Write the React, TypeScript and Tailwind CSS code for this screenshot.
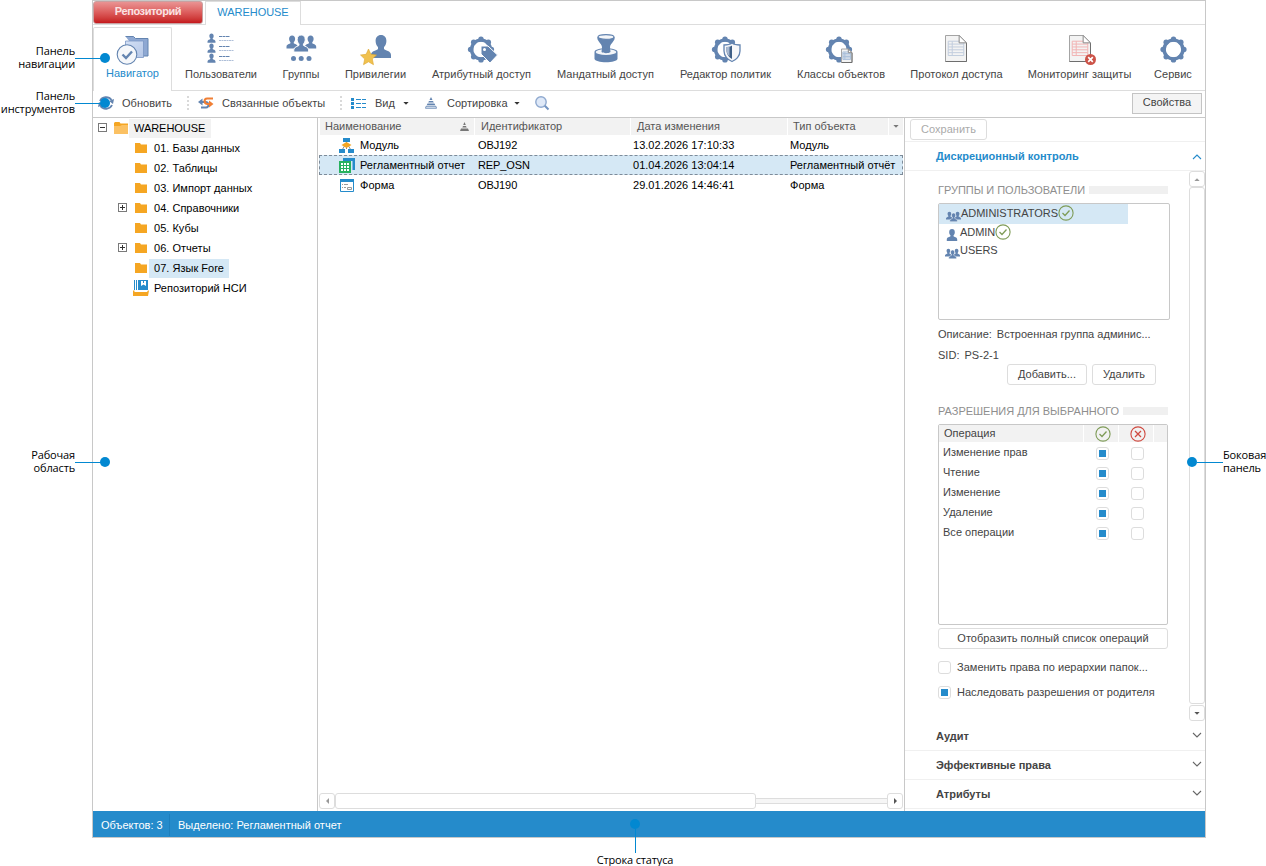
import React from "react";

const BLUE = "#6384b0";

function Gear({ cx = 14, cy = 16.5 }: { cx?: number; cy?: number }) {
  const bumps = [0, 45, 90, 135, 180, 225, 270, 315];
  return (
    <g fill={BLUE}>
      <circle cx={cx} cy={cy} r="9.4" fill="none" stroke={BLUE} strokeWidth="3.4" />
      {bumps.map((a) => (
        <circle
          key={a}
          cx={cx + 10.4 * Math.cos((a * Math.PI) / 180)}
          cy={cy + 10.4 * Math.sin((a * Math.PI) / 180)}
          r="2.7"
        />
      ))}
    </g>
  );
}

function Person({ x = 0, y = 0, s = 1 }: { x?: number; y?: number; s?: number }) {
  return (
    <g transform={`translate(${x} ${y}) scale(${s})`}>
      <path
        fill={BLUE}
        d="M10 0c3.4 0 5.4 2.4 5.4 6 0 2.6-1 4.8-2.4 6v2c1 1.5 7 1.700 7 6v3H0v-3c0-4.300 6-4.500 7-6v-2C5.600 10.800 4.600 8.600 4.600 6c0-3.600 2-6 5.400-6z"
      />
    </g>
  );
}

function GroupIcon() {
  return (
    <svg width="15" height="11" viewBox="0 0 15 11" className="shrink-0">
      <Person x={0} y={0.8} s={0.34} />
      <Person x={8.2} y={0.8} s={0.34} />
      <g stroke="#fff" strokeWidth="1.200">
        <Person x={3.800} y={2} s={0.38} />
      </g>
    </svg>
  );
}

function Sheet({ x, y, w, h, line }: { x: number; y: number; w: number; h: number; line: string }) {
  const f = w * 0.35;
  const rows = [0, 1, 2, 3, 4, 5];
  const top = y + h * 0.22;
  const gh = (h * 0.55) / 5;
  return (
    <g>
      <path
        d={`M${x} ${y}h${w - f}l${f} ${f}v${h - f}h${-w}z`}
        fill="#f3f3f3"
        stroke="#a4a4a4"
      />
      <path d={`M${x + w} ${y + f}v${h - f}h${-w}`} fill="none" stroke="#6e6e6e" />
      <g stroke={line} strokeWidth="1" fill="none">
        {rows.map((r) => (
          <path key={r} d={`M${x + w * 0.13} ${top + r * gh}h${w * 0.74}`} />
        ))}
        <path
          d={`M${x + w * 0.13} ${top}v${gh * 5}M${x + w * 0.32} ${top}v${gh * 5}M${x + w * 0.87} ${top}v${gh * 5}`}
        />
      </g>
      <path d={`M${x + w - f} ${y}v${f}h${f}z`} fill="#fff" stroke="#8a8a8a" />
    </g>
  );
}

const navIcons: Record<string, React.ReactNode> = {
  nav: (
    <g>
      <defs>
        <linearGradient id="fold" x1="0" y1="0" x2="1" y2="1">
          <stop offset="0" stopColor="#d3e0f5" />
          <stop offset="1" stopColor="#b4c6e6" />
        </linearGradient>
      </defs>
      <path d="M8.500 3.500h8l2 2h12.500V23H24" fill="#8ea8d2" stroke={BLUE} />
      <path d="M8.500 8h18v16.500h-18z" fill="url(#fold)" stroke="#7b97c4" strokeWidth=".8" />
      <circle cx="10" cy="21.500" r="9.800" fill="#f5f7fa" stroke={BLUE} strokeWidth="1.100" />
      <path d="M5.500 21.500l3.500 3.500 6-6.500" fill="none" stroke={BLUE} strokeWidth="2.400" />
    </g>
  ),
  users: (
    <g>
      {[0, 10, 20].map((y) => (
        <g key={y}>
          <Person x={2.500} y={y + 0.5} s={0.4} />
          <path d={`M14 ${y + 3.500}h11`} stroke={BLUE} strokeDasharray="3 .5" />
          <path d={`M14 ${y + 7.500}h15`} stroke="#aebfd8" strokeDasharray="2 .5" />
        </g>
      ))}
    </g>
  ),
  groups: (
    <g>
      <Person x={1.500} y={2.500} s={0.56} />
      <Person x={20} y={2.500} s={0.56} />
      <g stroke="#fff" strokeWidth="1.300">
        <Person x={8.800} y={2} s={0.74} />
      </g>
      <g fill={BLUE}>
        <circle cx="8.500" cy="25.500" r="2.500" />
        <circle cx="16.200" cy="25.500" r="2.500" />
        <circle cx="24" cy="25.500" r="2.500" />
      </g>
    </g>
  ),
  priv: (
    <g>
      <Person x={11} y={2} s={1} />
      <path
        d="M8.500 16l2.400 5.300 5.600.7-4.200 4 1.200 5.700-5-2.900-5 2.900 1.200-5.700-4.200-4 5.600-.7z"
        fill="#f0c14f"
        stroke="#dba630"
        strokeWidth=".6"
      />
    </g>
  ),
  attr: (
    <g>
      <Gear />
      <path d="M14 13h7l9.500 9-7.500 8L14 21z" fill={BLUE} stroke="#fff" strokeWidth="1" />
      <circle cx="17.500" cy="16.500" r="1.500" fill="#fff" />
    </g>
  ),
  mandate: (
    <g transform="translate(1 0)">
      <path d="M3.500 19c0-5 23-5 23 0v6.500c0 5-23 5-23 0z" fill={BLUE} />
      <ellipse cx="15" cy="19" rx="10.300" ry="3" fill="#f4f6f9" />
      <path d="M6.500 4h17c1 4-4 6-4.500 10l.5 5c-2 1.600-7 1.600-9 0l.5-5c-.5-4-5.500-6-4.500-10z" fill={BLUE} />
      <ellipse cx="15" cy="4" rx="8" ry="2.400" fill="#f4f6f9" stroke={BLUE} strokeWidth="1.200" />
    </g>
  ),
  policy: (
    <g>
      <Gear />
      <path d="M13 12c3 0 6-.5 8-2 2 1.500 4 2 8 2v6c0 5-4 9-8 10.500C17 27 13 23 13 18z" fill="#f6f7f9" stroke={BLUE} strokeWidth="1.300" />
      <path d="M21 12.500v13.500c-3-1.500-5.500-5-5.500-8.500v-3.500c2 0 4-.5 5.500-1.500z" fill="#3f5f86" />
      <path d="M15.500 14c1 0 2-.2 3-.5v10c-2-2-3-4-3-6z" fill="#a9bad2" />
    </g>
  ),
  classes: (
    <g>
      <Gear />
      <Sheet x={16.500} y={16} w={10.500} h={13.500} line="#a9bfda" />
    </g>
  ),
  log: <Sheet x={4.500} y={2.500} w={21} h={26} line="#c2cede" />,
  monitor: (
    <g>
      <Sheet x={5.500} y={2.500} w={21} h={26} line="#f1b4b4" />
      <circle cx="26.500" cy="26.500" r="5.500" fill="#cc5348" />
      <path d="M24.200 24.200l4.600 4.600m0-4.600l-4.600 4.600" stroke="#fff" strokeWidth="1.700" />
    </g>
  ),
  gear: <Gear cx={14.500} />,
};

const navItems = [
  { icon: "users", label: "Пользователи", box: "w-[98px]", dx: "ml-0" },
  { icon: "groups", label: "Группы", box: "w-[62px]", dx: "ml-0" },
  { icon: "priv", label: "Привилегии", box: "w-[87px]", dx: "ml-0" },
  { icon: "attr", label: "Атрибутный доступ", box: "w-[125px]", dx: "ml-[3px]" },
  { icon: "mandate", label: "Мандатный доступ", box: "w-[123px]", dx: "ml-0" },
  { icon: "policy", label: "Редактор политик", box: "w-[117px]", dx: "ml-[2px]" },
  { icon: "classes", label: "Классы объектов", box: "w-[114px]", dx: "ml-0" },
  { icon: "log", label: "Протокол доступа", box: "w-[117px]", dx: "ml-0" },
  { icon: "monitor", label: "Мониторинг защиты", box: "w-[129px]", dx: "ml-0" },
  { icon: "gear", label: "Сервис", box: "w-[58px]", dx: "ml-[3px]" },
];

function NavIcon({ name }: { name: string }) {
  return (
    <svg width="32" height="32" viewBox="0 0 32 32" className="shrink-0 overflow-visible">
      {navIcons[name]}
    </svg>
  );
}

function Caret({ className }: { className: string }) {
  return (
    <svg width="6" height="3" viewBox="0 0 7 4" className={`shrink-0 ${className}`}>
      <path d="M0 0h7L3.500 3.800z" fill="currentColor" />
    </svg>
  );
}

function Grip({ className }: { className: string }) {
  return (
    <svg width="2" height="14" viewBox="0 0 2 14" className={className}>
      <path d="M0 1h2M0 5h2M0 9h2M0 13h2" stroke="#d9d9d9" strokeWidth="2" />
    </svg>
  );
}

function Toolbar() {
  return (
    <div className="flex h-[27px] shrink-0 items-center border-b border-[#c8c8c8] pb-[2px] text-[#444]">
      <svg width="17" height="16" viewBox="0 0 17 16" className="ml-[5px] shrink-0">
        <path d="M2 6a6.500 6 0 0 1 11.500 -1M14 10a6.500 6 0 0 1-11.500 1" fill="none" stroke={BLUE} strokeWidth="1.800" />
        <path d="M16 4l-1 5-4-3zM0 12l1-5 4 3z" fill={BLUE} />
      </svg>
      <span className="ml-[7px] w-[51px]">Обновить</span>
      <Grip className="ml-[14px] shrink-0" />
      <svg width="16" height="14" viewBox="0 0 16 14" className="ml-[9px] shrink-0">
        <path d="M3 11.500h5c3.500 0 3-5.500-.5-5.500H4" fill="none" stroke={BLUE} strokeWidth="2" />
        <path d="M0 6l4.500-3.500v7z" fill={BLUE} />
        <path d="M15 2.500H9c-3.500 0-3 5.500.5 5.500H12" fill="none" stroke="#f07f35" strokeWidth="2.200" />
        <path d="M15.500 8L11 4.500v7z" fill="#f07f35" />
      </svg>
      <span className="ml-[8px] w-[104px]">Связанные объекты</span>
      <Grip className="ml-[14px] shrink-0" />
      <svg width="16" height="11" viewBox="0 0 16 11" className="ml-[9px] shrink-0">
        <path d="M0 1.500h3M0 5.500h3M0 9.500h3" stroke="#258bcb" strokeWidth="3" />
        <path d="M5 1.500h5m1 0h4M5 5.500h5m1 0h4M5 9.500h5m1 0h4" stroke="#258bcb" />
      </svg>
      <span className="ml-[8px] w-[21px]">Вид</span>
      <Caret className="ml-[7px] text-[#333]" />
      <svg width="12" height="12" viewBox="0 0 12 12" className="ml-[16px] shrink-0">
        <path d="M6 0l1.500 3h-3zM4 4h4l.8 1.600H3.200zM2.500 6.600h7l.8 1.600H1.700z" fill={BLUE} />
        <path d="M1 9.300h10l.5 2H.5z" fill="#dbe5f2" stroke={BLUE} strokeWidth=".8" />
      </svg>
      <span className="ml-[10px] w-[61px]">Сортировка</span>
      <Caret className="ml-[6px] text-[#333]" />
      <svg width="15" height="15" viewBox="0 0 15 15" className="ml-[15px] shrink-0">
        <circle cx="6" cy="6" r="5.200" fill="#dfe9f8" stroke="#8fa9cf" strokeWidth="1.400" />
        <path d="M9.800 9.800L13.500 13.500" stroke="#7394c2" strokeWidth="2" />
      </svg>
      <button className="mr-[3px] ml-auto h-[21px] w-[70px] border border-[#c4c4c4] bg-[#f4f4f4] pb-[2px] leading-none">
        Свойства
      </button>
    </div>
  );
}

function Folder() {
  return (
    <svg width="12" height="10" viewBox="0 0 12 10" className="shrink-0">
      <path d="M0 0h5l1 1.500h6V10H0z" fill="#f5a623" />
    </svg>
  );
}

function Expander({ open }: { open?: boolean }) {
  return (
    <svg width="9" height="9" viewBox="0 0 9 9" className="shrink-0">
      <rect x=".5" y=".5" width="8" height="8" fill="#fff" stroke="#7a7a7a" />
      <path d="M2 4.500h5" stroke="#333" />
      {!open && <path d="M4.500 2v5" stroke="#333" />}
    </svg>
  );
}

const treeItems = [
  { label: "01. Базы данных" },
  { label: "02. Таблицы" },
  { label: "03. Импорт данных" },
  { label: "04. Справочники", expandable: true },
  { label: "05. Кубы" },
  { label: "06. Отчеты", expandable: true },
  { label: "07. Язык Fore", selected: true },
];

function Tree() {
  return (
    <div className="flex w-[225px] shrink-0 flex-col border-r border-[#c8c8c8] text-black">
      <div className="flex h-[20px] items-center pl-[5px]">
        <span className="mb-[2px] flex"><Expander open /></span>
        <svg width="15" height="12" viewBox="0 0 15 12" className="ml-[7px] shrink-0">
          <path d="M1 0h4.500l1 1.500H14V12H0V1z" fill="#f5a623" />
          <path d="M0 4h6l2-1h6v9H0z" fill="#fbc163" />
        </svg>
        <span className="flex h-[19px] items-center bg-[#f2f2f2] pr-[6px] pl-[5px] tracking-[-0.05px]">WAREHOUSE</span>
      </div>
      {treeItems.map((t) => (
        <div key={t.label} className="flex h-[20px] items-center">
          <div className="flex w-[42px] pb-[1px] pl-[25px]">{t.expandable && <Expander />}</div>
          <Folder />
          <span
            className={
              t.selected
                ? "ml-[2px] flex h-[19px] items-center bg-[#d5e8f5] pr-[5px] pl-[5px]"
                : "ml-[2px] flex h-[19px] items-center pl-[5px]"
            }
          >
            {t.label}
          </span>
        </div>
      ))}
      <div className="flex h-[20px] items-center pl-[40px]">
        <svg width="16" height="16" viewBox="0 0 16 16" className="shrink-0">
          <path d="M1.500 0v10M3.500 0v10" stroke="#258bcb" strokeWidth="1" />
          <path d="M5 0h10v10H5z" fill="#258bcb" />
          <path d="M8 1h5v5l-2.500-1.500L8 6z" fill="#fff" />
          <path d="M10 1h1v2h-1z" fill="#258bcb" />
          <path d="M0 10.500h1.500V12H14l1-1.500h1L15 16H0z" fill="#f5a623" />
        </svg>
        <span className="ml-[5px]">Репозиторий НСИ</span>
      </div>
    </div>
  );
}

const rowIcons = [
  <g key="m">
    <path d="M7.500 2v9M2.500 13l3-5h4l3 5" fill="none" stroke="#8a8a8a" />
    <path d="M4 0h7v4H4zM0 11h6v4H0zM9 11h6v4H9z" fill="#258bcb" />
    <path d="M7.500 4l5 3-5 3-5-3z" fill="#f5a623" />
  </g>,
  <g key="r">
    <path d="M4 0h12v12h-2.500V3H4z" fill="#258bcb" />
    <path d="M0 3h12v12H0z" fill="#27b15f" />
    <path d="M2 5h8v8H2z" fill="#fff" />
    <path d="M4.500 5v8M7.500 5v8M2 7.500h8M2 10.500h8" stroke="#27b15f" />
  </g>,
  <g key="f">
    <path d="M1.500 1.500h13v12h-13z" fill="#fff" stroke="#258bcb" />
    <path d="M1 1h14v3H1z" fill="#258bcb" />
    <path d="M3 6.500h1m1 0h4M3 9.500h1m1 0h2" stroke="#999" />
    <path d="M8.500 9.500h4v2h-4z" fill="none" stroke="#999" />
  </g>,
];

const rows = [
  ["Модуль", "OBJ192", "13.02.2026 17:10:33", "Модуль"],
  ["Регламентный отчет", "REP_OSN", "01.04.2026 13:04:14", "Регламентный отчёт"],
  ["Форма", "OBJ190", "29.01.2026 14:46:41", "Форма"],
];

function ObjectList() {
  return (
    <div className="flex w-[587px] shrink-0 flex-col border-r border-[#c8c8c8]">
      <div className="mr-[1px] ml-[2px] flex h-[17px] shrink-0 gap-[1px] text-[#555]">
        <div className="flex w-[154px] items-center bg-[#f2f2f2] pl-[5px]">
          Наименование
          <svg width="9" height="9" viewBox="0 0 9 9" className="mr-[5px] ml-auto">
            <path d="M4.500 0l1.300 3h-2.600zM3 4h3l.7 1.500H2.300zM1 6.500h7l1 2.500H0z" fill="#777" />
          </svg>
        </div>
        <div className="flex w-[155px] items-center bg-[#f2f2f2] pl-[6px]">Идентификатор</div>
        <div className="flex w-[156px] items-center bg-[#f2f2f2] pl-[6px]">Дата изменения</div>
        <div className="flex w-[100px] items-center bg-[#f2f2f2] pl-[5px]">Тип объекта</div>
        <div className="flex flex-1 items-center justify-center bg-[#f2f2f2]">
          <Caret className="text-[#777]" />
        </div>
      </div>
      <div className="flex flex-col pr-[1px] pl-[1px] text-black">
        {rows.map((r, i) => (
          <div
            key={r[1]}
            className={
              i === 1
                ? "flex h-[20px] items-center border border-dashed border-[#7d8b99] bg-[#d5e8f5] pl-[19px]"
                : "flex h-[20px] items-center pl-[20px]"
            }
          >
            <svg width="16" height="15" viewBox="0 0 16 15" className="shrink-0">
              {rowIcons[i]}
            </svg>
            <span className="ml-[5px] w-[118px] shrink-0">{r[0]}</span>
            <span className="w-[155px] shrink-0 tracking-[-0.1px]">{r[1]}</span>
            <span className="w-[157px] shrink-0">{r[2]}</span>
            <span>{r[3]}</span>
          </div>
        ))}
      </div>
      <div className="mt-auto mr-[1px] mb-[2px] flex h-[16px] items-center pl-[1px]">
        <div className="flex h-[16px] w-[16px] items-center justify-center rounded-[3px] border border-[#ddd]">
          <svg width="3" height="6" viewBox="0 0 3 6"><path d="M3 0v6L0 3z" fill="#999" /></svg>
        </div>
        <div className="h-[16px] w-[421px] rounded-[3px] border border-[#ddd]" />
        <div className="h-[6px] flex-1 border-y border-[#ddd] bg-[#f6f6f6]" />
        <div className="flex h-[16px] w-[16px] items-center justify-center rounded-[3px] border border-[#ddd]">
          <svg width="3" height="6" viewBox="0 0 3 6"><path d="M0 0v6l3-3z" fill="#555" /></svg>
        </div>
      </div>
    </div>
  );
}

function Check({ on, className = "" }: { on?: boolean; className?: string }) {
  return (
    <span className={`flex h-[13px] w-[13px] shrink-0 items-center justify-center rounded-[3px] border border-[#ddd] bg-white ${className}`}>
      {on && <span className="h-[7px] w-[7px] bg-[#258bcb]" />}
    </span>
  );
}

function Round({ deny, className = "" }: { deny?: boolean; className?: string }) {
  return (
    <svg width="16" height="16" viewBox="0 0 16 16" className={`shrink-0 ${className}`}>
      <circle cx="8" cy="8" r="7.100" fill="none" stroke={deny ? "#cf4a40" : "#7f9c58"} strokeWidth="1.100" />
      <path
        d={deny ? "M5 5l6 6M11 5l-6 6" : "M4.500 8l2.500 2.500L11.500 5.500"}
        fill="none"
        stroke={deny ? "#cf4a40" : "#7f9c58"}
        strokeWidth="1.300"
      />
    </svg>
  );
}

function Chevron({ up }: { up?: boolean }) {
  return (
    <svg
      width="10"
      height="6"
      viewBox="0 0 10 6"
      className={up ? "mt-[2px] mr-[3px] ml-auto shrink-0" : "mr-[3px] mb-[3px] ml-auto shrink-0"}
    >
      <path d={up ? "M1 5l4-4 4 4" : "M1 1l4 4 4-4"} fill="none" stroke={up ? "#258bcb" : "#666"} strokeWidth="1.100" />
    </svg>
  );
}

const operations = ["Изменение прав", "Чтение", "Изменение", "Удаление", "Все операции"];
const buttonBase = "flex items-center justify-center rounded-[3px] border border-[#ddd] bg-white leading-none";

function SidePanel() {
  return (
    <div className="flex min-w-0 flex-1 flex-col text-[#444]">
      <div className="flex h-[24px] shrink-0 border-b border-[#f0f0f0] pt-[1px] pl-[5px]">
        <button className={`${buttonBase} h-[21px] w-[77px] text-[#aaa]`}>Сохранить</button>
      </div>
      <div className="flex h-[29px] shrink-0 items-center border-b border-[#f0f0f0] pl-[31px] font-bold text-[#258bcb]">
        <span className="tracking-[0px]">Дискреционный контроль</span>
        <Chevron up />
      </div>
      <div className="flex h-[551px] shrink-0">
        <div className="flex w-[284px] shrink-0 flex-col pl-[33px]">
          <div className="mt-[11px] flex h-[16px] items-center text-[#8e8e8e]">
            <span className="w-[151px]  tracking-[-0.04px]">ГРУППЫ И ПОЛЬЗОВАТЕЛИ</span>
            <span className="h-[8px] w-[79px] bg-[#f0f0f0]" />
          </div>
          <div className="mt-[5px] h-[117px] w-[232px] rounded-[2px] border border-[#c8c8c8]">
            <div className="flex h-[20px] w-[189px] items-center bg-[#d5e8f5] pb-[2px] pl-[7px]">
              <span className="mt-[6px]"><GroupIcon /></span>
              <span className="tracking-[-0.03px]">ADMINISTRATORS</span>
              <Round />
            </div>
            <div className="flex h-[18px] items-center pb-[2px] pl-[7px]">
              <svg width="12" height="12" viewBox="0 0 20 23" className="mt-[6px] mr-[2px]"><Person /></svg>
              <span className="tracking-[-0.05px]">ADMIN</span>
              <Round />
            </div>
            <div className="flex h-[18px] items-center pb-[2px] pl-[6px]">
              <span className="mt-[6px]"><GroupIcon /></span>
              <span className="tracking-[-0.05px]">USERS</span>
            </div>
          </div>
          <div className="mt-[6px] flex h-[17px] items-center gap-[5px]">
            <span>Описание:</span>
            <span>Встроенная группа админис...</span>
          </div>
          <div className="mt-[4px] flex h-[16px] items-center gap-[5px]">
            <span>SID:</span>
            <span>PS-2-1</span>
          </div>
          <div className="mt-[1px] flex gap-[5px] pl-[69px]">
            <button className={`${buttonBase} h-[21px] w-[80px]`}>Добавить...</button>
            <button className={`${buttonBase} h-[21px] w-[64px]`}>Удалить</button>
          </div>
          <div className="mt-[18px] flex h-[16px] items-center text-[#8e8e8e]">
            <span className="w-[185px] tracking-[-0.02px]">РАЗРЕШЕНИЯ ДЛЯ ВЫБРАННОГО</span>
            <span className="h-[8px] w-[45px] bg-[#f0f0f0]" />
          </div>
          <div className="mt-[5px] h-[201px] w-[230px] rounded-[2px] border border-[#c8c8c8]">
            <div className="flex h-[17px] gap-[1px]">
              <div className="flex w-[144px] items-center bg-[#f2f2f2] pl-[5px]">Операция</div>
              <div className="flex w-[34px] items-center justify-center bg-[#f2f2f2]"><Round className="mt-[1px] ml-[4px]" /></div>
              <div className="flex w-[34px] items-center justify-center bg-[#f2f2f2]"><Round deny className="mt-[1px] ml-[4px]" /></div>
              <div className="flex-1 bg-[#f2f2f2]" />
            </div>
            {operations.map((o) => (
              <div key={o} className="flex h-[20px] items-center pl-[4px]">
                <span className="w-[153px]">{o}</span>
                <Check on className="mt-[3px]" />
                <Check className="mt-[3px] ml-[22px]" />
              </div>
            ))}
          </div>
          <button className={`${buttonBase} mt-[3px] h-[21px] w-[230px]`}>Отобразить полный список операций</button>
          <div className="mt-[11px] flex h-[15px] items-center">
            <Check />
            <span className="ml-[6px]">Заменить права по иерархии папок...</span>
          </div>
          <div className="mt-[10px] flex h-[15px] items-center">
            <Check on />
            <span className="ml-[6px]">Наследовать разрешения от родителя</span>
          </div>
        </div>
        <div className="flex w-[16px] shrink-0 flex-col">
          <div className="flex h-[16px] items-center justify-center rounded-[3px] border border-[#ddd]">
            <Caret className="rotate-180 text-[#999]" />
          </div>
          <div className="h-[517px] rounded-[3px] border border-[#ddd]" />
          <div className="mt-[1px] flex h-[16px] items-center justify-center rounded-[3px] border border-[#ddd]">
            <Caret className="text-[#555]" />
          </div>
        </div>
      </div>
      {["Аудит", "Эффективные права", "Атрибуты"].map((t) => (
        <div key={t} className="flex h-[29px] shrink-0 items-center border-b border-[#f0f0f0] pl-[31px] font-bold">
          <span className="tracking-[0px]">{t}</span>
          <Chevron />
        </div>
      ))}
    </div>
  );
}

const calloutText = "text-[11px] leading-[13px] font-['Open_Sans',sans-serif] text-black tracking-[-0.15px]";
const dot = "h-[10px] w-[10px] shrink-0 rounded-full bg-[#0288d1]";

function LeftCallout({ lines, className }: { lines: string[]; className: string }) {
  return (
    <div className={`absolute left-0 flex h-[26px] w-[111px] items-center ${className}`}>
      <div className={`flex w-[75px] shrink-0 flex-col items-end ${calloutText}`}>
        {lines.map((l) => (
          <span key={l}>{l}</span>
        ))}
      </div>
      <div className="mt-[2px] h-px w-[26px] bg-[#0288d1]" />
      <div className={`${dot} mt-[2px] -ml-px`} />
    </div>
  );
}

export default function App() {
  return (
    <div className="relative h-[866px] w-[1266px] overflow-hidden bg-white font-['Liberation_Sans',Arial,sans-serif] text-[11px] leading-[13px] tracking-[0.02px] whitespace-nowrap">
      <div className="ml-[92px] flex h-[838px] w-[1114px] flex-col border border-[#c8c8c8]">
        <div className="flex h-[24px] shrink-0">
          <div className="flex w-[112px] border-b border-[#ddd]">
            <div className="flex h-[23px] w-[110px] items-center justify-center rounded-[3px] border border-[#c9a0a0] bg-linear-to-b from-[#e99393] via-[#dc5c5c] to-[#c4161c] pb-[2px] font-bold tracking-[-0.4px] text-[#fbe3e3]">
              Репозиторий
            </div>
          </div>
          <div className="flex w-[96px] items-center justify-center border-x border-t border-[#ddd] pb-[2px] tracking-[-0.04px] text-[#258bcb]">
            WAREHOUSE
          </div>
          <div className="flex-1 border-b border-[#ddd]" />
        </div>
        <div className="flex h-[66px] shrink-0 pt-[2px]">
          <div className="flex w-[79px] flex-col items-center rounded-t-[2px] border-x border-t border-[#ddd] pt-[5px] text-[#258bcb]">
            <NavIcon name="nav" />
            <span className="mt-[2px]">Навигатор</span>
          </div>
          <div className="flex flex-1 border-b border-[#ddd] text-[#444]">
            {navItems.map((n) => (
              <div key={n.label} className={`flex shrink-0 flex-col items-center pt-[6px] ${n.box}`}>
                <div className={`h-[32px] ${n.dx}`}>
                  <NavIcon name={n.icon} />
                </div>
                <span className="mt-[3px]">{n.label}</span>
              </div>
            ))}
          </div>
        </div>
        <Toolbar />
        <div className="flex min-h-0 flex-1">
          <Tree />
          <ObjectList />
          <SidePanel />
        </div>
        <div className="flex h-[26px] shrink-0 items-center bg-[#258bcb] pt-[2px] pl-[8px] text-white">
          <span className="w-[68px]">Объектов: 3</span>
          <span className="h-[22px] w-px bg-[#1d7fbd]" />
          <span className="ml-[8px]">Выделено: Регламентный отчет</span>
        </div>
      </div>

      <LeftCallout lines={["Панель", "навигации"]} className="top-[44px]" />
      <LeftCallout lines={["Панель", "инструментов"]} className="top-[89px]" />
      <LeftCallout lines={["Рабочая", "область"]} className="top-[448px]" />
      <div className="absolute top-[448px] left-[1187px] flex h-[26px] items-center">
        <div className={`${dot} mt-[2px]`} />
        <div className="mt-[2px] h-px w-[26px] bg-[#0288d1]" />
        <div className={`flex flex-col ${calloutText}`}>
          <span>Боковая</span>
          <span>панель</span>
        </div>
      </div>
      <div className="absolute top-[819px] left-[589px] flex w-[92px] flex-col items-center">
        <div className={dot} />
        <div className="h-[24px] w-px bg-[#0288d1]" />
        <span className={`${calloutText} h-[13px]`}>Строка статуса</span>
      </div>
    </div>
  );
}
